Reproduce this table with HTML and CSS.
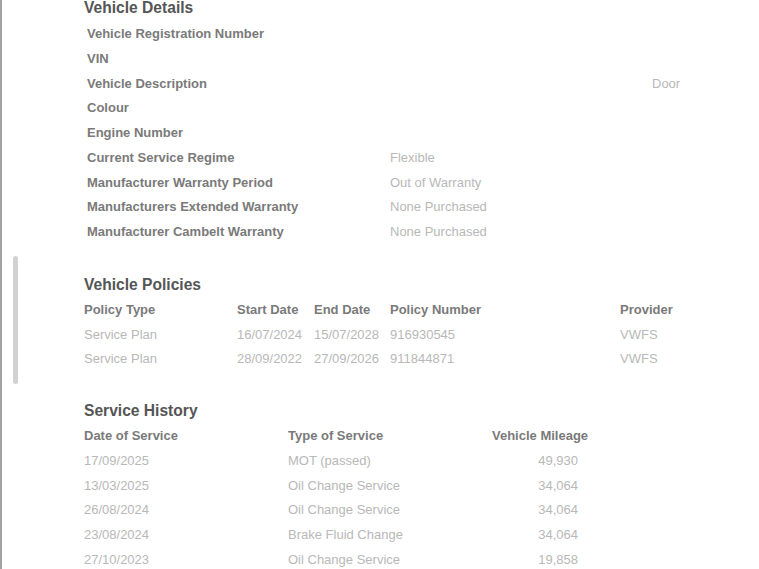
FILE: index.html
```html
<!DOCTYPE html>
<html lang="en">
<head>
<meta charset="utf-8">
<title>Vehicle Details</title>
<link rel="stylesheet" href="styles.css">
</head>
<body>
<div class="page">
  <div class="scrollbar"></div>
  <section class="section details">
    <h2 class="title">Vehicle Details</h2>
    <div class="detail-grid">
      <div class="label">Vehicle Registration Number</div><div class="value"></div><div class="value"></div>
      <div class="label">VIN</div><div class="value"></div><div class="value"></div>
      <div class="label">Vehicle Description</div><div class="value"></div><div class="value">Door</div>
      <div class="label">Colour</div><div class="value"></div><div class="value"></div>
      <div class="label">Engine Number</div><div class="value"></div><div class="value"></div>
      <div class="label">Current Service Regime</div><div class="value">Flexible</div><div class="value"></div>
      <div class="label">Manufacturer Warranty Period</div><div class="value">Out of Warranty</div><div class="value"></div>
      <div class="label">Manufacturers Extended Warranty</div><div class="value">None Purchased</div><div class="value"></div>
      <div class="label">Manufacturer Cambelt Warranty</div><div class="value">None Purchased</div><div class="value"></div>
    </div>
  </section>

  <section class="section policies">
    <h2 class="title">Vehicle Policies</h2>
    <div class="policy-grid">
      <div class="head">Policy Type</div><div class="head">Start Date</div><div class="head">End Date</div><div class="head">Policy Number</div><div class="head">Provider</div>
      <div class="cell">Service Plan</div><div class="cell">16/07/2024</div><div class="cell">15/07/2028</div><div class="cell">916930545</div><div class="cell">VWFS</div>
      <div class="cell">Service Plan</div><div class="cell">28/09/2022</div><div class="cell">27/09/2026</div><div class="cell">911844871</div><div class="cell">VWFS</div>
    </div>
  </section>

  <section class="section history">
    <h2 class="title">Service History</h2>
    <div class="history-grid">
      <div class="head">Date of Service</div><div class="head">Type of Service</div><div class="head">Vehicle Mileage</div>
      <div class="cell">17/09/2025</div><div class="cell">MOT (passed)</div><div class="cell num">49,930</div>
      <div class="cell">13/03/2025</div><div class="cell">Oil Change Service</div><div class="cell num">34,064</div>
      <div class="cell">26/08/2024</div><div class="cell">Oil Change Service</div><div class="cell num">34,064</div>
      <div class="cell">23/08/2024</div><div class="cell">Brake Fluid Change</div><div class="cell num">34,064</div>
      <div class="cell">27/10/2023</div><div class="cell">Oil Change Service</div><div class="cell num">19,858</div>
    </div>
  </section>
</div>
</body>
</html>
```

FILE: styles.css
```css
html, body {
  margin: 0;
  padding: 0;
  background: #fff;
  overflow: hidden;
}
body {
  font-family: "Liberation Sans", Arial, sans-serif;
  height: 569px;
}
.page {
  position: relative;
  height: 569px;
  border-left: 2px solid #a3a3a3;
  padding-left: 82px;
  box-sizing: border-box;
  overflow: hidden;
}
.scrollbar {
  position: absolute;
  left: 11px;
  top: 256px;
  width: 5px;
  height: 128px;
  border-radius: 3px;
  background: #d2d2d2;
}
.section {
  margin-top: 26px;
}
.details {
  margin-top: -6px;
}
.history {
  margin-top: 25px;
}
.title {
  margin: 0;
  font-size: 15.6px;
  font-weight: bold;
  line-height: 27px;
  color: #555;
}
.detail-grid {
  display: grid;
  grid-template-columns: 303px 262px 1fr;
  padding-left: 3px;
  margin-top: 1px;
}
.label, .head {
  font-size: 13px;
  font-weight: bold;
  color: #7a7a7a;
  line-height: 24.75px;
  white-space: nowrap;
}
.value, .cell {
  font-size: 13px;
  color: #b8b8b8;
  line-height: 24.75px;
  white-space: nowrap;
}
.policy-grid {
  display: grid;
  grid-template-columns: 153px 77px 76px 230px 1fr;
}
.history-grid {
  display: grid;
  grid-template-columns: 204px 204px 97px;
}
.num {
  text-align: right;
  padding-right: 11px;
}
```
